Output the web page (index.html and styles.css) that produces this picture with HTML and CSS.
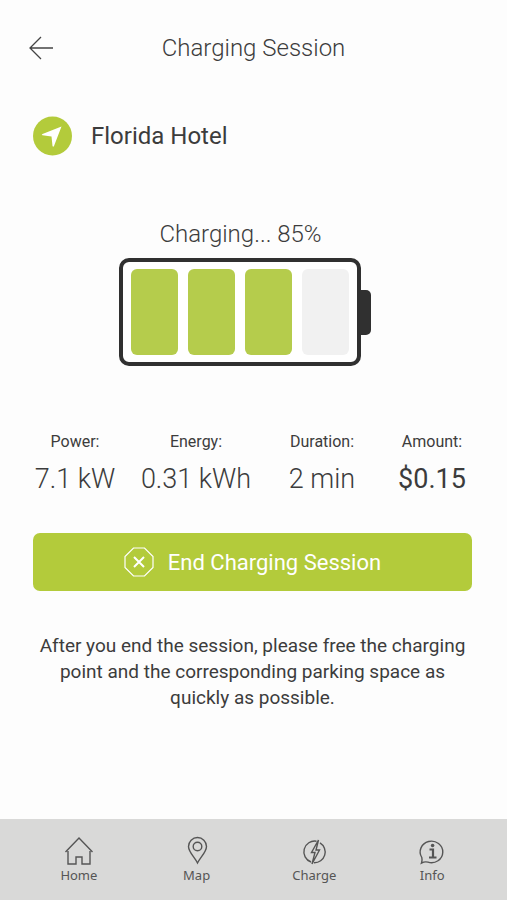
FILE: index.html
```html
<!DOCTYPE html>
<html lang="en">
<head>
    <meta charset="UTF-8">
    <meta name="viewport" content="width=device-width, initial-scale=1.0">
    <title>Charging Session</title>
    <link rel="stylesheet" href="styles.css">
</head>
<body>
<header class="header">
    <a class="back" href="#" aria-label="Back">
        <svg width="24" height="24" viewBox="0 0 24 24"><path d="M12 1 1 12l11 11M1 12h23"/></svg>
    </a>
    <h1>Charging Session</h1>
</header>

<main class="content">
    <div class="location">
        <svg class="location-icon" width="40" height="40" viewBox="0 0 40 40">
            <circle cx="19.500" cy="20" r="19.500" fill="#b3cb3b"/>
            <path d="M28.500 10.500 9.500 18q-1.500 1 0 1.300l9 1.200 1 9.500q.7 1.500 1.500 0Z" fill="#fff"/>
        </svg>
        <h2>Florida Hotel</h2>
    </div>

    <section class="charging">
        <p class="status">Charging... 85%</p>
        <div class="battery">
            <div class="battery-body">
                <span class="cell full"></span>
                <span class="cell full"></span>
                <span class="cell full"></span>
                <span class="cell"></span>
            </div>
            <div class="battery-tip"></div>
        </div>
    </section>

    <dl class="stats">
        <div><dt>Power:</dt><dd>7.1 kW</dd></div>
        <div><dt>Energy:</dt><dd>0.31 kWh</dd></div>
        <div><dt>Duration:</dt><dd>2 min</dd></div>
        <div><dt>Amount:</dt><dd class="amount">$0.15</dd></div>
    </dl>

    <button class="end-button" type="button">
        <svg width="30" height="30" viewBox="0 0 30 30">
            <path d="M9.500 1h11L29 9.500v11L20.500 29h-11L1 20.500v-11Z" stroke-width="1.200"/>
            <path d="m10 10 10 10M20 10 10 20" stroke-width="2"/>
        </svg>
        End Charging Session
    </button>

    <p class="note">After you end the session, please free the charging point and the corresponding parking space as quickly as possible.</p>
</main>

<nav class="nav">
    <a href="#">
        <svg width="30" height="30" viewBox="0 0 30 30"><path d="M4 15v13h8v-7h6v7h8V15M1.500 16 15 2l13.500 14"/></svg>
        Home
    </a>
    <a href="#">
        <svg width="30" height="30" viewBox="0 0 30 30"><path d="M15.500 27C12.500 21 6.500 16 6.500 10.500a9 9 0 0 1 18 0C24.500 16 18.500 21 15.500 27Z"/><circle cx="15.500" cy="10.500" r="4.300"/></svg>
        Map
    </a>
    <a href="#">
        <svg width="30" height="30" viewBox="0 0 30 30"><path d="M17.500 5.200A10.800 10.800 0 0 0 12 26M21 6.800A10.800 10.800 0 0 1 15 26.800M19.500 4l-7 12.500h3.500L13 28l7.500-14H17Z"/></svg>
        Charge
    </a>
    <a href="#">
        <svg width="30" height="30" viewBox="0 0 30 30"><path d="M4.500 27c.8-2 .8-3.500.3-5.500A11.300 10.800 0 1 1 11 26.200c-2-.6-4.500-.2-6.500.8Z"/><path d="M12.500 13.500H16V21M12 21.500h7.500" stroke-width="2.200"/><circle cx="15.600" cy="9.500" r="1.800" fill="#555" stroke="none"/></svg>
        Info
    </a>
</nav>
</body>
</html>
```

FILE: styles.css
```css
* {
    box-sizing: border-box;
}
body {
    margin: 0;
    min-height: 100vh;
    display: flex;
    flex-direction: column;
    background-color: #fdfdfd;
    color: #3c3c3c;
    font-family: Roboto, sans-serif;
}
h1, h2, p, dl, dd {
    margin: 0;
}
svg {
    flex: none;
    fill: none;
}
.header {
    display: grid;
    grid-template-columns: 24px 1fr 24px;
    align-items: center;
    padding: 32px 29px 0;
}
.back {
    display: flex;
}
.back svg {
    stroke: #444;
    stroke-width: 1.3;
}
h1 {
    font-size: 24px;
    font-weight: 300;
    line-height: 32px;
    text-align: center;
}
.content {
    flex: 1;
    padding: 52px 35px 32px 33px;
}
.location {
    display: flex;
    align-items: center;
    gap: 18px;
}
h2 {
    font-size: 24px;
    font-weight: 400;
    line-height: 32px;
}
.charging {
    display: flex;
    flex-direction: column;
    align-items: center;
    margin-top: 62px;
    padding-right: 16px;
}
.status {
    margin-right: 8px;
    font-size: 24px;
    font-weight: 300;
    line-height: 32px;
}
.battery {
    display: flex;
    align-items: center;
    margin-top: 8px;
}
.battery-body {
    display: flex;
    gap: 10px;
    padding: 7px 8px;
    border: 4px solid #303030;
    border-radius: 10px;
    background-color: #fff;
}
.cell {
    width: 47px;
    height: 86px;
    border-radius: 6px;
    background-color: #f1f1f1;
}
.cell.full {
    background-color: #b5cc4c;
}
.battery-tip {
    width: 10px;
    height: 45px;
    border-radius: 0 5px 5px 0;
    background-color: #303030;
}
.stats {
    display: grid;
    grid-template-columns: 106fr 136fr 116fr 104fr;
    margin: 64px -12px 0 -11px;
    text-align: center;
}
dt {
    font-size: 16px;
    line-height: 24px;
}
dd {
    font-size: 27px;
    font-weight: 300;
    line-height: 36px;
    margin-top: 7px;
    white-space: nowrap;
}
.amount {
    font-weight: 400;
}
.end-button {
    display: flex;
    align-items: center;
    justify-content: center;
    gap: 14px;
    width: 100%;
    height: 58px;
    margin-top: 36px;
    padding: 0;
    border: none;
    border-radius: 7px;
    background-color: #b3cb3b;
    color: #fff;
    font-family: inherit;
    font-size: 22px;
    cursor: pointer;
}
.end-button svg {
    stroke: #fff;
}
.note {
    margin-top: 42px;
    font-size: 19px;
    line-height: 26px;
    text-align: center;
}
.nav {
    display: grid;
    grid-template-columns: repeat(4, 1fr);
    padding: 17px 16px 16px 20px;
    background-color: #d9d9d8;
}
.nav a {
    display: flex;
    flex-direction: column;
    align-items: center;
    color: #555;
    font-family: "Noto Sans", sans-serif;
    font-size: 13px;
    line-height: 18px;
    text-decoration: none;
}
.nav svg {
    stroke: #555;
    stroke-width: 1.4;
}
```
